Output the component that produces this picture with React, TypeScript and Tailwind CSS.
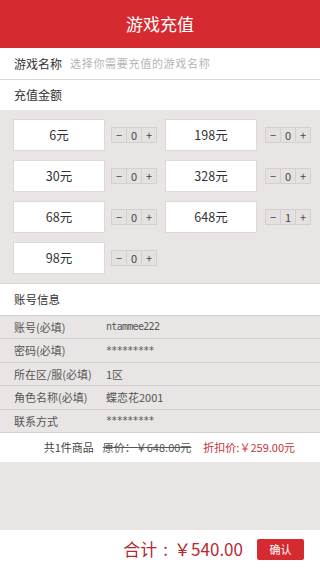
import React from "react";

const items = [
  { price: "6元", qty: 0 },
  { price: "198元", qty: 0 },
  { price: "30元", qty: 0 },
  { price: "328元", qty: 0 },
  { price: "68元", qty: 0 },
  { price: "648元", qty: 1 },
  { price: "98元", qty: 0 },
];

const rows = [
  { label: "账号(必填)", value: "ntammee222", mono: true },
  { label: "密码(必填)", value: "*********", mono: true },
  { label: "所在区/服(必填)", value: "1区", mono: false },
  { label: "角色名称(必填)", value: "蝶恋花2001", mono: false },
  { label: "联系方式", value: "*********", mono: true },
];

function Stepper({ qty }: { qty: number }) {
  return (
    <div className="flex h-[16px] w-[46px] border border-[#d3d0cf] bg-[#e4e1e0] text-[#444] text-[11px] leading-none">
      <div className="flex-1 flex items-center justify-center border-r border-[#d3d0cf]">−</div>
      <div className="flex-1 flex items-center justify-center border-r border-[#d3d0cf]">{qty}</div>
      <div className="flex-1 flex items-center justify-center">+</div>
    </div>
  );
}

export default function App() {
  return (
    <div className="w-[320px] h-[568px] bg-[#e8e5e4] flex flex-col font-['Noto_Sans_CJK_SC','Noto_Sans',sans-serif] text-[#333] overflow-hidden">
      <div className="h-[48px] bg-[#d52b30] flex items-center justify-center text-white text-[17px] shrink-0">
        游戏充值
      </div>
      <div className="h-[32px] bg-white border-b border-[#dad7d6] flex items-center pl-[14px] shrink-0">
        <span className="text-[12px] w-[56px]">游戏名称</span>
        <span className="text-[11px] text-[#b5b5b5] tracking-[0.7px]">选择你需要充值的游戏名称</span>
      </div>
      <div className="h-[30px] bg-white flex items-center pl-[14px] text-[12px] shrink-0">充值金额</div>
      <div className="pt-[9px] pb-[9px] px-[13px] grid grid-cols-[144px_146px] gap-x-[8px] gap-y-[9px] shrink-0">
        {items.map((it) => (
          <div key={it.price} className="flex items-center justify-between">
            <div className="w-[92px] h-[32px] bg-white border border-[#dcd9d8] flex items-center justify-center text-[12.5px] text-[#333]">
              {it.price}
            </div>
            <Stepper qty={it.qty} />
          </div>
        ))}
      </div>
      <div className="h-[32px] bg-white border-t border-[#d8d5d4] flex items-center pl-[14px] text-[11.5px] shrink-0">
        账号信息
      </div>
      {rows.map((r) => (
        <div key={r.label} className="h-[23.4px] border-t border-[#d3d0cf] flex items-center pl-[14px] text-[11px] text-[#555] shrink-0">
          <span className="w-[92px]">{r.label}</span>
          {r.mono ? (
            <span className="font-['DejaVu_Sans_Mono',monospace] text-[10px] tracking-[-0.7px] text-[#555] leading-none">{r.value}</span>
          ) : (
            <span className="text-[11px]">{r.value}</span>
          )}
        </div>
      ))}
      <div className="h-[30px] bg-white border-t border-[#d3d0cf] flex items-center justify-end pr-[25px] text-[11px] shrink-0">
        <span className="text-[#444]">共1件商品</span>
        <span className="ml-[9px] text-[#555] line-through">原价：￥648.00元</span>
        <span className="ml-[12px] text-[#c9323a]">折扣价:￥259.00元</span>
      </div>
      <div className="flex-1" />
      <div className="h-[38px] bg-white flex items-center justify-end pr-[16px] shrink-0">
        <span className="text-[17px] text-[#b42a33] flex items-center">
          <span>合计</span>
          <span className="mx-[6px]">:</span>
          <span>￥540.00</span>
        </span>
        <div className="ml-[14px] w-[47px] h-[21px] bg-[#d52b30] rounded-[2px] flex items-center justify-center text-white text-[11px]">
          确认
        </div>
      </div>
    </div>
  );
}
